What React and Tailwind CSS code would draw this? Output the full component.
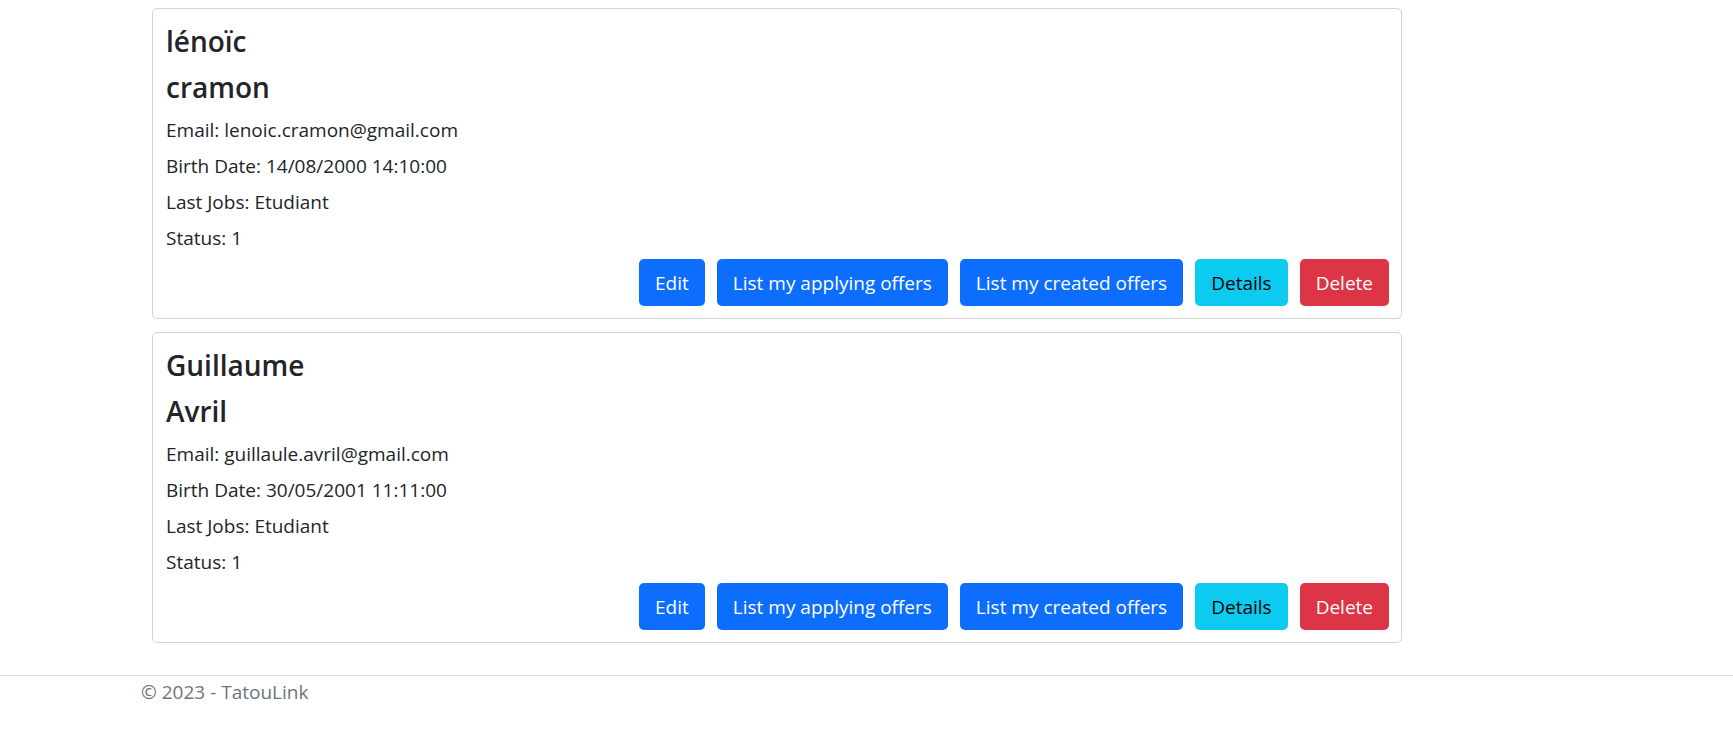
import React from "react";

const users = [
  {
    first: "lénoïc",
    last: "cramon",
    email: "lenoic.cramon@gmail.com",
    birth: "14/08/2000 14:10:00",
    job: "Etudiant",
    status: "1",
  },
  {
    first: "Guillaume",
    last: "Avril",
    email: "guillaule.avril@gmail.com",
    birth: "30/05/2001 11:11:00",
    job: "Etudiant",
    status: "1",
  },
];

function UserCard({ u }) {
  return (
    <div className="w-[1250px] mb-[13px] border border-[#d2d2d2] rounded-[5px] pl-[13px] pr-[12px] pt-[14px] pb-[12px] bg-white">
      <h4 className="text-[28px] leading-[36px] font-semibold mb-[10px]">{u.first}</h4>
      <h4 className="text-[28px] leading-[36px] font-semibold mb-[10px]">{u.last}</h4>
      <p className="text-[19px] leading-[30px] mb-[6px]">Email: {u.email}</p>
      <p className="text-[19px] leading-[30px] mb-[6px]">Birth Date: {u.birth}</p>
      <p className="text-[19px] leading-[30px] mb-[6px]">Last Jobs: {u.job}</p>
      <p className="text-[19px] leading-[30px] mb-[6px]">Status: {u.status}</p>
      <div className="flex justify-end gap-[12px]">
        <button className="h-[47px] px-[16px] rounded-[5px] bg-[#0d6efd] text-white text-[19px] leading-[30px]">Edit</button>
        <button className="h-[47px] px-[16px] rounded-[5px] bg-[#0d6efd] text-white text-[19px] leading-[30px]">List my applying offers</button>
        <button className="h-[47px] px-[16px] rounded-[5px] bg-[#0d6efd] text-white text-[19px] leading-[30px]">List my created offers</button>
        <button className="h-[47px] px-[16px] rounded-[5px] bg-[#0dcaf0] text-black text-[19px] leading-[30px]">Details</button>
        <button className="h-[47px] px-[16px] rounded-[5px] bg-[#dc3545] text-white text-[19px] leading-[30px]">Delete</button>
      </div>
    </div>
  );
}

export default function App() {
  return (
    <div className="min-h-[756px] bg-white text-[#212529] font-['Open_Sans','Noto_Sans',sans-serif]">
      <main className="pt-[8px] pl-[152px]">
        {users.map((u, i) => (
          <UserCard key={i} u={u} />
        ))}
      </main>
      <footer className="mt-[32px] border-t border-[#dee2e6] pt-[1px] pl-[141px] text-[#6c757d] text-[19px] leading-[30px]">
        © 2023 - TatouLink
      </footer>
    </div>
  );
}
